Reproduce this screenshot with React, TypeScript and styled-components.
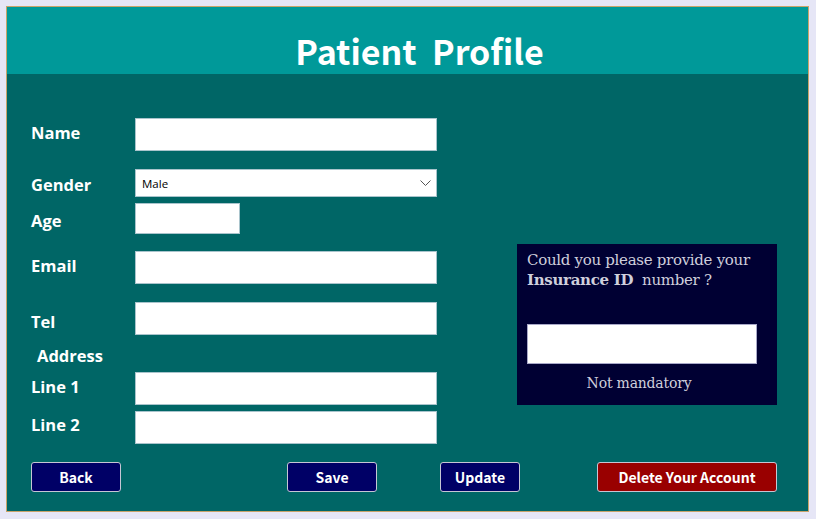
import React from "react";
import styled, { createGlobalStyle } from "styled-components";

const Global = createGlobalStyle`
  html, body { margin: 0; padding: 0; background: #e6e6f6; }
  * { box-sizing: border-box; }
`;

const Page = styled.div`
  width: 816px;
  height: 519px;
  padding: 6px 7px 7px 6px;
  background: #e6e6f6;
`;

const Panel = styled.div`
  width: 803px;
  height: 506px;
  border: 1px solid #c9a46a;
  background: #006666;
  display: flex;
  flex-direction: column;
`;

const Header = styled.header`
  height: 67px;
  background: #009999;
  display: flex;
  justify-content: center;
  align-items: flex-end;
  padding-bottom: 0;
`;

const Title = styled.h1`
  margin: 0;
  color: #ffffff;
  font-family: "Noto Sans CJK KR", "Noto Sans", sans-serif;
  font-weight: 700;
  font-size: 34px;
  line-height: 46px;
  white-space: pre;
  padding-left: 24px;
`;

const Body = styled.main`
  display: flex;
  align-items: flex-start;
  padding: 44px 0 0 24px;
`;

const Form = styled.div`
  width: 406px;
  display: flex;
  flex-direction: column;
`;

const Row = styled.div<{ $top: number; $h: number; $shift?: number }>`
  display: flex;
  align-items: center;
  height: ${(p) => p.$h}px;
  margin-top: ${(p) => p.$top}px;
  & > label {
    transform: translateY(${(p) => p.$shift ?? 0}px);
  }
`;

const Label = styled.label<{ $indent?: number }>`
  width: 104px;
  padding-left: ${(p) => p.$indent ?? 0}px;
  color: #ffffff;
  font-family: "Open Sans", "Noto Sans", sans-serif;
  font-weight: 700;
  font-size: 16.5px;
  flex-shrink: 0;
`;

const Input = styled.input<{ $w?: number }>`
  width: ${(p) => p.$w ?? 302}px;
  height: 100%;
  border: 1px solid #a9c4cc;
  background: #ffffff;
  margin: 0;
  padding: 0 6px;
  outline: none;
`;

const SelectWrap = styled.div`
  position: relative;
  width: 302px;
  height: 100%;
`;

const Select = styled.select`
  appearance: none;
  -webkit-appearance: none;
  width: 100%;
  height: 100%;
  border: 1px solid #a9c4cc;
  border-radius: 0;
  background: #ffffff;
  font-family: "Open Sans", "Noto Sans", sans-serif;
  font-size: 11.5px;
  color: #000;
  padding: 0 0 0 6px;
  margin: 0;
  outline: none;
`;

const Chevron = styled.svg`
  position: absolute;
  right: 6px;
  top: 50%;
  margin-top: -3px;
  pointer-events: none;
`;

const Insurance = styled.section`
  margin-left: 80px;
  margin-top: 126px;
  width: 260px;
  height: 161px;
  background: #000033;
  padding: 6px 10px 0 10px;
  display: flex;
  flex-direction: column;
  color: #cfcfdc;
  font-family: "DejaVu Serif", "Liberation Serif", serif;
`;

const Question = styled.p`
  margin: 0;
  font-size: 15px;
  line-height: 20px;
  letter-spacing: -0.3px;
  white-space: nowrap;
  strong { font-weight: 700; }
`;

const InsInput = styled.input`
  margin-top: 34px;
  width: 230px;
  height: 40px;
  border: 1px solid #a8a8c8;
  background: #ffffff;
  padding: 0 6px;
  outline: none;
`;

const Note = styled.div`
  width: 224px;
  text-align: center;
  margin-top: 11px;
  font-size: 14px;
  letter-spacing: -0.2px;
`;

const Actions = styled.div`
  display: flex;
  padding: 18px 0 0 24px;
`;

const Button = styled.button<{ $w: number; $ml: number; $danger?: boolean }>`
  width: ${(p) => p.$w}px;
  height: 30px;
  margin-left: ${(p) => p.$ml}px;
  background: ${(p) => (p.$danger ? "#990000" : "#000066")};
  border: 1px solid #c6c6d4;
  border-radius: 3px;
  color: #ffffff;
  font-family: "Noto Sans CJK KR", "Noto Sans", sans-serif;
  font-weight: 700;
  font-size: 14px;
  line-height: 28px;
  padding: 0;
  cursor: pointer;
`;

export default function App() {
  return (
    <>
      <Global />
      <Page>
        <Panel>
          <Header>
            <Title>{"Patient  Profile"}</Title>
          </Header>
          <Body>
            <Form>
              <Row $top={0} $h={33} $shift={-2}>
                <Label>Name</Label>
                <Input />
              </Row>
              <Row $top={18} $h={28} $shift={1}>
                <Label>Gender</Label>
                <SelectWrap>
                  <Select defaultValue="Male">
                    <option>Male</option>
                    <option>Female</option>
                  </Select>
                  <Chevron width="11" height="6" viewBox="0 0 11 6">
                    <path d="M0.5 0.5 L5.5 5.5 L10.5 0.5" fill="none" stroke="#555" strokeWidth="1" />
                  </Chevron>
                </SelectWrap>
              </Row>
              <Row $top={6} $h={31} $shift={2}>
                <Label>Age</Label>
                <Input $w={105} />
              </Row>
              <Row $top={17} $h={33} $shift={-2}>
                <Label>Email</Label>
                <Input />
              </Row>
              <Row $top={18} $h={33} $shift={3}>
                <Label>Tel</Label>
                <Input />
              </Row>
              <Row $top={6} $h={31} $shift={-1}>
                <Label $indent={6}>Address</Label>
              </Row>
              <Row $top={0} $h={33} $shift={-2}>
                <Label>Line 1</Label>
                <Input />
              </Row>
              <Row $top={6} $h={33} $shift={-3}>
                <Label>Line 2</Label>
                <Input />
              </Row>
            </Form>
            <Insurance>
              <Question>
                Could you please provide your
                <br />
                <strong>Insurance ID</strong>&nbsp; number ?
              </Question>
              <InsInput />
              <Note>Not mandatory</Note>
            </Insurance>
          </Body>
          <Actions>
            <Button $w={90} $ml={0}>Back</Button>
            <Button $w={90} $ml={166}>Save</Button>
            <Button $w={80} $ml={63}>Update</Button>
            <Button $w={180} $ml={77} $danger>Delete Your Account</Button>
          </Actions>
        </Panel>
      </Page>
    </>
  );
}
